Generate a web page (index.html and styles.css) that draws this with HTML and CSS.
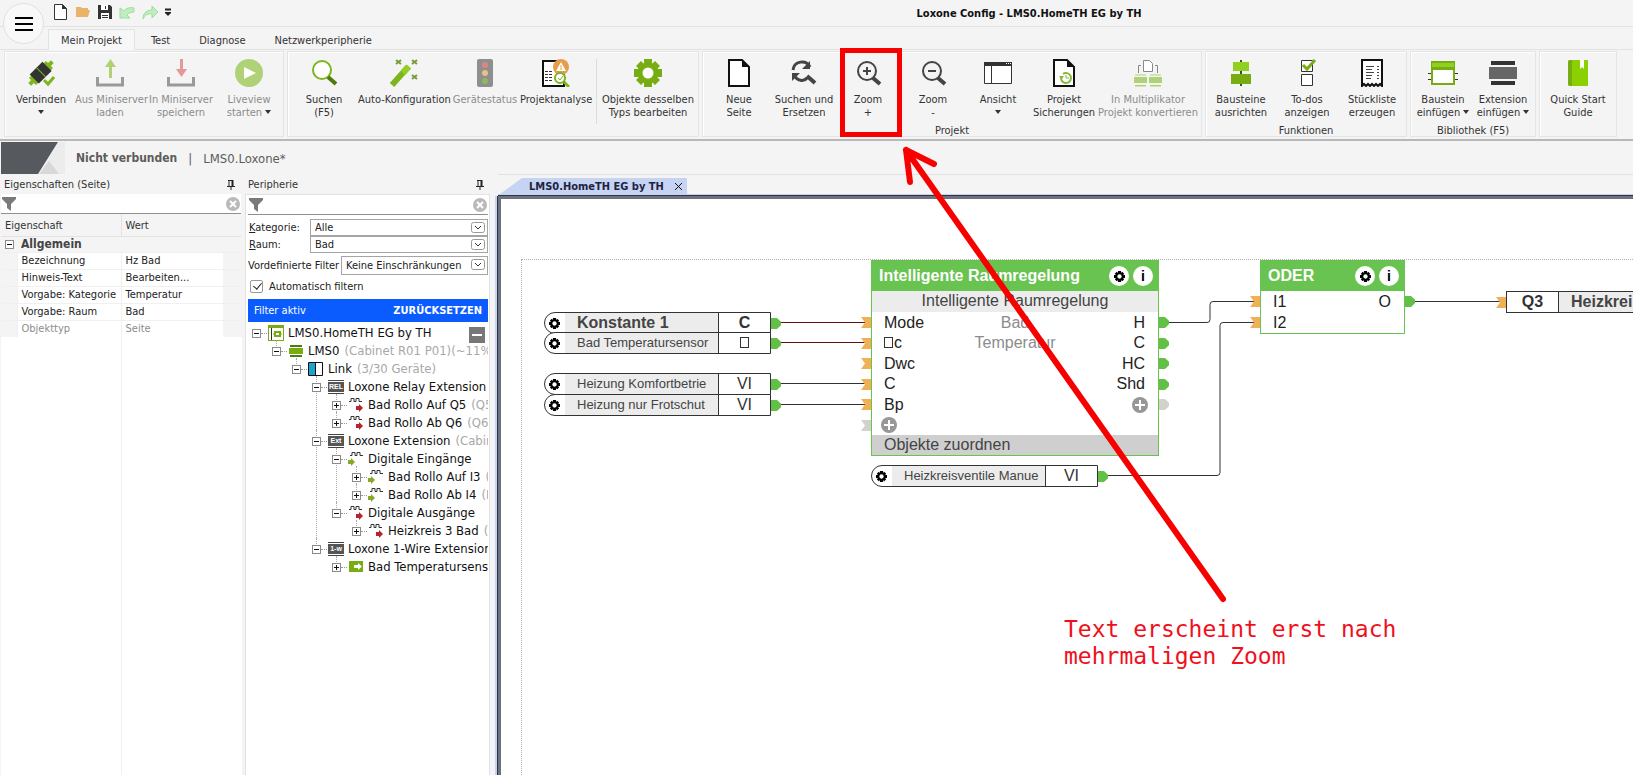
FILE: index.html
```html
<!DOCTYPE html>
<html lang="de">
<head>
    <meta charset="UTF-8">
    <meta name="viewport" content="width=device-width, initial-scale=1.0">
    <title>Loxone Config - LMS0.HomeTH EG by TH</title>
    <link rel="stylesheet" href="styles.css">
</head>
<body>
    <svg class="defs" aria-hidden="true">
        <symbol id="gear" viewBox="0 0 28 28">
            <g stroke="currentColor" stroke-width="8">
                <path d="M14 0v28M0 14h28"/>
                <path stroke-width="7" d="M4.500 4.500l19 19M23.500 4.500l-19 19"/>
            </g>
            <circle cx="14" cy="14" r="10.500" fill="currentColor"/>
            <circle cx="14" cy="14" r="5.500" fill="#fff"/>
        </symbol>
        <symbol id="funnel" viewBox="0 0 14 14"><path fill="#7a7a7a" d="M0 0h14v2L9 7v7l-4-3V7L0 2z"/></symbol>
        <symbol id="clear" viewBox="0 0 14 14"><circle cx="7" cy="7" r="7" fill="#b9b9b9"/><path d="M4 4l6 6M10 4l-6 6" stroke="#fff" stroke-width="2"/></symbol>
        <symbol id="pin" viewBox="0 0 8 10"><path d="M2 0v6M1 .5h5M0 6.500h8M4 6v4" stroke="#222" fill="none"/><path d="M5.500 0v6" stroke="#222" stroke-width="2"/></symbol>
        <symbol id="plus" viewBox="0 0 16 16"><circle cx="8" cy="8" r="8" fill="#979797"/><path d="M8 3v10M3 8h10" stroke="#fff" stroke-width="2"/></symbol>
        <symbol id="chev" viewBox="0 0 14 11"><rect x=".5" y=".5" width="13" height="10" rx="2" fill="#fff" stroke="#999"/><path d="M4 4l3 3 3-3" fill="none" stroke="#333"/></symbol>
        <symbol id="dig-out" viewBox="0 0 16 16"><path d="M1 4.500h2v-3h3v3h2v-3h3v3h3" fill="none" stroke="#333"/><path d="M8 9h3V7l4 4-4 4v-2H8z" fill="#b5232e"/></symbol>
        <symbol id="dig-in" viewBox="0 0 16 16"><path d="M2 4.500h2v-3h3v3h2v-3h3v3h3" fill="none" stroke="#333"/><path d="M0 9h3V7l4 4-4 4v-2H0z" fill="#85a82d"/></symbol>
    </svg>

    <header class="titlebar">
        <button class="app-button" aria-label="Menü">
            <svg width="20" height="16"><path d="M1 2h18M1 8h18M1 14h18" stroke="#000" stroke-width="2"/></svg>
        </button>
        <div class="quickbar">
            <button aria-label="Neu"><svg width="16" height="18"><path d="M1.500 1.500h8l4 4v11h-12z" fill="#fff" stroke="#333"/><path d="M9 1v5h5z" fill="#333"/></svg></button>
            <button aria-label="Öffnen"><svg width="16" height="18"><path d="M1 4h5l1 1h6v2h2l-2 7H1z" fill="#e9b468"/></svg></button>
            <button aria-label="Speichern"><svg width="16" height="18"><path d="M1 2h12l2 2v12H1z" fill="#333"/><path d="M4 2h7v5H4zM4 10h8v6H4z" fill="#fff"/><path d="M8.500 3v3M5 12.500h6M5 14.500h6" stroke="#333"/></svg></button>
            <button aria-label="Rückgängig"><svg width="16" height="18"><path d="M1 5v10h10l-3-3c1-2 4-3 7-3V5c-4-1-8 0-10 3z" fill="#c4ecc2" stroke="#9adf9a"/></svg></button>
            <button aria-label="Wiederholen"><svg width="18" height="18"><path d="M11 3l6 6-6 6v-4c-4-1-7 1-9 5 0-6 4-9 9-9z" fill="#c4ecc2" stroke="#9adf9a"/></svg></button>
            <button aria-label="Anpassen"><svg width="6" height="18"><path d="M0 6.500h6" stroke="#222" stroke-width="2"/><path d="M0 9h6v1l-3 3-3-3z" fill="#222"/></svg></button>
        </div>
        <h1>Loxone Config - LMS0.HomeTH EG by TH</h1>
    </header>

    <nav class="tabs">
        <a class="active" href="#projekt">Mein Projekt</a>
        <a href="#test">Test</a>
        <a href="#diagnose">Diagnose</a>
        <a href="#netzwerk">Netzwerkperipherie</a>
    </nav>

    <div class="ribbon" id="projekt">
        <section class="group">
            <div class="tools">
                <button class="w68">
                    <svg width="28" height="28"><g transform="rotate(-45 14 14)"><path d="M-2 12h4v-3h24v3h4v4h-4v3H2v-3h-4z" fill="#7db51c"/><rect x="5" y="7" width="18" height="13" fill="#333"/><path d="M14.500 7v13" stroke="#7db51c"/></g><path d="M17 21l4 4 6-7" fill="none" stroke="#7db51c" stroke-width="3"/></svg>
                    Verbinden<br><i class="caret"></i>
                </button>
                <button class="w70" disabled>
                    <svg width="28" height="28"><path d="M1.500 18v8h25v-8" fill="none" stroke="#999" stroke-width="3"/><path d="M14.500 19V4" stroke="#afd277" stroke-width="3"/><path d="M9 8l5.500-8L20 8z" fill="#afd277"/></svg>
                    Aus Miniserver<br>laden
                </button>
                <button class="w72" disabled>
                    <svg width="28" height="28"><path d="M1.500 18v8h25v-8" fill="none" stroke="#999" stroke-width="3"/><path d="M14.500 0v12" stroke="#e39a97" stroke-width="3"/><path d="M9 10l5.500 8 5.500-8z" fill="#e39a97"/></svg>
                    In Miniserver<br>speichern
                </button>
                <button class="w64" disabled>
                    <svg width="28" height="28"><circle cx="14" cy="14" r="14" fill="#afd277"/><path d="M9 8l12 6-12 6z" fill="#fff"/></svg>
                    Liveview<br>starten <i class="caret"></i>
                </button>
            </div>
        </section>

        <section class="group">
            <div class="tools">
                <button class="w68">
                    <svg width="28" height="28"><circle cx="12" cy="11" r="9" fill="#fff" stroke="#7db51c" stroke-width="2"/><path d="M18 18l8 7" stroke="#4e7a10" stroke-width="4"/></svg>
                    Suchen<br>(F5)
                </button>
                <button class="w92">
                    <svg width="28" height="28"><path d="M2 26L18 8" stroke="#7db51c" stroke-width="6"/><path d="M13 14l6-6.500" stroke="#8fd120" stroke-width="6"/><path d="M6 1l5 4M11 1L6 5M22 1l5 4M27 1l-5 4M22 16l5 4M27 16l-5 4" stroke="#7a9c3a" stroke-width="2"/></svg>
                    Auto-Konfiguration
                </button>
                <button class="w70" disabled>
                    <svg width="28" height="28"><rect x="6" width="16" height="28" rx="2" fill="#8f8f8f"/><circle cx="14" cy="6" r="3" fill="#dc8683"/><circle cx="14" cy="14" r="3" fill="#edc183"/><circle cx="14" cy="22" r="3" fill="#8dba58"/></svg>
                    Gerätestatus
                </button>
                <button class="w72">
                    <svg width="28" height="28"><path d="M1 2h21v25H1z" fill="#fff" stroke="#111" stroke-width="2"/><path d="M3 12.500h8M3 15.500h8M3 18.500h8M3 21.500h8" stroke="#333" stroke-dasharray="3 1"/><circle cx="19" cy="8" r="8" fill="#e79c4c"/><path d="M19 3l5 9H14z" fill="#fff"/><path d="M19 6v5" stroke="#e79c4c"/><circle cx="18" cy="19" r="5" fill="#fff" stroke="#7db51c" stroke-width="2"/><path d="M22 23l5 5" stroke="#7db51c" stroke-width="3"/><path d="M16 19l2 2 3-4" fill="none" stroke="#7db51c"/></svg>
                    Projektanalyse
                </button>
                <div class="sep"></div>
                <button class="w96">
                    <svg class="green" width="28" height="28"><use href="#gear"/></svg>
                    Objekte desselben<br>Typs bearbeiten
                </button>
            </div>
        </section>

        <section class="group">
            <div class="tools">
                <button class="w68">
                    <svg width="28" height="28"><path d="M4 1h13l7 7v19H4z" fill="#fff" stroke="#111" stroke-width="2"/><path d="M17 1v7h7z" fill="#111"/></svg>
                    Neue<br>Seite
                </button>
                <button class="w62">
                    <svg width="28" height="28"><path d="M3 11c1-9 13-11 17-3M4 16c3 6 10 7 13 3" fill="none" stroke="#444" stroke-width="3"/><path d="M20 2v8h-8zM2 22v-8h8z" fill="#444"/><path d="M17 17l8 7" stroke="#444" stroke-width="4"/></svg>
                    Suchen und<br>Ersetzen
                </button>
                <button class="w66">
                    <svg width="28" height="28"><circle cx="13" cy="12" r="9" fill="none" stroke="#444" stroke-width="2"/><path d="M9 12h8M13 8v8" stroke="#444" stroke-width="2"/><path d="M19 19l7 6" stroke="#444" stroke-width="4"/></svg>
                    Zoom<br>+
                </button>
                <button class="w64">
                    <svg width="28" height="28"><circle cx="13" cy="12" r="9" fill="none" stroke="#444" stroke-width="2"/><path d="M9 12h8" stroke="#444" stroke-width="2"/><path d="M19 19l7 6" stroke="#444" stroke-width="4"/></svg>
                    Zoom<br>-
                </button>
                <button class="w66">
                    <svg width="28" height="28"><path d="M.5 3.500h27v21H.5z" fill="#fff" stroke="#333"/><path d="M0 5h28" stroke="#333" stroke-width="4"/><path d="M7.500 7v17" stroke="#333"/><path d="M22 4.500h5" stroke="#fff" stroke-dasharray="1 1"/></svg>
                    Ansicht<br><i class="caret"></i>
                </button>
                <button class="w66">
                    <svg width="28" height="28"><path d="M4 1h13l7 7v19H4z" fill="#fff" stroke="#111" stroke-width="2"/><path d="M17 1v7h7z" fill="#111"/><path d="M11 19a5 5 0 1 0 2-4" fill="none" stroke="#86b83c" stroke-width="2"/><path d="M9 17h5l-2.500 4z" fill="#86b83c"/><path d="M16 16v3h3" fill="none" stroke="#86b83c"/></svg>
                    Projekt<br>Sicherungen
                </button>
                <button class="w102" disabled>
                    <svg width="28" height="28"><path d="M9.500 1.500h6l3 3v8h-9z" fill="#fff" stroke="#888"/><path d="M7 6.500H4.500V14M21 6.500h2.500V14" fill="none" stroke="#888"/><path d="M0 18h13v6H0zM15 18h13v6H15zM1 15.500h11v1H1zM16 15.500h11v1H16zM1 26h11v1.500H1zM16 26h11v1.500H16z" fill="#afd277"/></svg>
                    In Multiplikator<br>Projekt konvertieren
                </button>
            </div>
            <h2>Projekt</h2>
        </section>

        <section class="group">
            <div class="tools">
                <button class="w66">
                    <svg width="28" height="28"><path d="M14 1v26" stroke="#365a0a" stroke-width="2"/><path d="M6 3h16v9H6z" fill="#8fd120"/><path d="M4 15h20v10H4z" fill="#77ad12"/></svg>
                    Bausteine<br>ausrichten
                </button>
                <button class="w66">
                    <svg width="28" height="28"><path d="M8.500 1.500h11v11h-11zM8.500 15.500h11v11h-11z" fill="#fff" stroke="#333"/><path d="M10 6l4 4 8-9" fill="none" stroke="#77ad12" stroke-width="3"/></svg>
                    To-dos<br>anzeigen
                </button>
                <button class="w64">
                    <svg width="28" height="28"><path d="M4 27V1h20v26l-2-2-2 2-2-2-2 2-2-2-2 2-2-2-2 2-2-2z" fill="#fff" stroke="#111" stroke-width="2"/><path d="M8 7.500h8M8 10.500h6M8 13.500h8M8 16.500h6M8 19.500h5M19 7.500h2M19 10.500h2M19 13.500h2M19 16.500h2M19 19.500h2" stroke="#444"/></svg>
                    Stückliste<br>erzeugen
                </button>
            </div>
            <h2>Funktionen</h2>
        </section>

        <section class="group">
            <div class="tools">
                <button class="w60">
                    <svg width="30" height="28"><path d="M0 14.500h30M0 20.500h30" stroke="#333"/><rect x="3" y="2" width="24" height="24" fill="#77ad12"/><path d="M4 4h22v4H4z" fill="#8fd120"/><rect x="5" y="11" width="20" height="13" fill="#fff"/></svg>
                    Baustein<br>einfügen <i class="caret"></i>
                </button>
                <button class="w60">
                    <svg width="28" height="28"><path d="M2 2h24v4H2zM2 22h24v4H2z" fill="#333"/><path d="M0 8h28v12H0z" fill="#666"/></svg>
                    Extension<br>einfügen <i class="caret"></i>
                </button>
            </div>
            <h2>Bibliothek (F5)</h2>
        </section>

        <section class="group">
            <div class="tools">
                <button class="w72">
                    <svg width="28" height="28"><path d="M6 1h18v26H6q-2 0-2-2V3q0-2 2-2z" fill="#8bd000"/><path d="M4 3q0-2 2-2h2v26H6q-2 0-2-2z" fill="#77ad12"/><path d="M16 1h4v9l-2-2-2 2z" fill="#fff"/></svg>
                    Quick Start<br>Guide
                </button>
            </div>
        </section>
    </div>

    <div class="status">
        <svg width="64" height="32"><path d="M38 32L58 0h6v32z" fill="#ececec"/><path d="M38 32l10-13 10 13z" fill="#d8d8d8"/><path d="M0 0h57L37 32H0z" fill="#565a5e"/></svg>
        <strong>Nicht verbunden</strong><span>|</span><span>LMS0.Loxone*</span>
    </div>

    <main class="workspace">
        <aside class="panel props">
            <header><h2>Eigenschaften (Seite)</h2><button aria-label="Anheften"><svg width="8" height="10"><use href="#pin"/></svg></button></header>
            <div class="filter">
                <svg width="14" height="14"><use href="#funnel"/></svg>
                <input type="text" aria-label="Eigenschaften filtern">
                <button aria-label="Filter löschen"><svg width="14" height="14"><use href="#clear"/></svg></button>
            </div>
            <table>
                <colgroup><col class="c-exp"><col class="c-name"><col><col class="c-pad"></colgroup>
                <thead>
                    <tr><th colspan="2">Eigenschaft</th><th>Wert</th><th class="pad"></th></tr>
                </thead>
                <tbody>
                    <tr class="section"><td class="exp"><i class="box minus"></i></td><td colspan="3">Allgemein</td></tr>
                    <tr><td class="exp"></td><td>Bezeichnung</td><td>Hz Bad</td><td class="pad"></td></tr>
                    <tr><td class="exp"></td><td>Hinweis-Text</td><td>Bearbeiten...</td><td class="pad"></td></tr>
                    <tr><td class="exp"></td><td>Vorgabe: Kategorie</td><td>Temperatur</td><td class="pad"></td></tr>
                    <tr><td class="exp"></td><td>Vorgabe: Raum</td><td>Bad</td><td class="pad"></td></tr>
                    <tr class="muted"><td class="exp"></td><td>Objekttyp</td><td>Seite</td><td class="pad"></td></tr>
                </tbody>
            </table>
            <div class="rest"></div>
        </aside>

        <aside class="panel periphery">
            <header><h2>Peripherie</h2><button aria-label="Anheften"><svg width="8" height="10"><use href="#pin"/></svg></button></header>
            <div class="sheet">
                <div class="filter">
                    <svg width="14" height="14"><use href="#funnel"/></svg>
                    <input type="text" aria-label="Peripherie filtern">
                    <button aria-label="Filter löschen"><svg width="14" height="14"><use href="#clear"/></svg></button>
                </div>
                <form>
                    <div class="field"><label for="kategorie"><u>K</u>ategorie:</label><span class="select"><select id="kategorie"><option>Alle</option></select><svg width="14" height="11"><use href="#chev"/></svg></span></div>
                    <div class="field"><label for="raum"><u>R</u>aum:</label><span class="select"><select id="raum"><option>Bad</option></select><svg width="14" height="11"><use href="#chev"/></svg></span></div>
                    <div class="field wide"><label for="vordefiniert">Vordefinierte Filter</label><span class="select"><select id="vordefiniert"><option>Keine Einschränkungen</option></select><svg width="14" height="11"><use href="#chev"/></svg></span></div>
                    <div class="check"><input type="checkbox" id="auto" checked><label for="auto">Automatisch filtern</label></div>
                </form>
                <div class="filterbar"><span>Filter aktiv</span><button>ZURÜCKSETZEN</button></div>

                <div class="tree">
                    <button class="collapse" aria-label="Alle einklappen"></button>
                    <ul>
                        <li>
                            <div class="node"><i class="box minus"></i><svg width="16" height="16"><path d="M0 0h16v16H0z" fill="#77ad12"/><path d="M1 3h14v12H1z" fill="#fff"/><path d="M3.500 3v12" stroke="#333"/><rect x="7" y="7" width="5" height="4" fill="none" stroke="#77ad12" stroke-width="2"/><path d="M5 9h1M13 9h1" stroke="#77ad12"/></svg>LMS0.HomeTH EG by TH</div>
                            <ul>
                                <li>
                                    <div class="node"><i class="box minus"></i><svg width="16" height="16"><path d="M2 2h12v2H2zM2 12h12v2H2z" fill="#4e7a10"/><path d="M1 5h14v6H1z" fill="#77ad12"/></svg>LMS0 <em>(Cabinet R01 P01)(~11%</em></div>
                                    <ul>
                                        <li>
                                            <div class="node"><i class="box minus"></i><svg width="16" height="16"><path d="M.5 1.500h14v13H.5z" fill="#fff" stroke="#111"/><path d="M1 2h6v12H1z" fill="#1ca4cf"/><path d="M7.500 2v12" stroke="#111"/></svg>Link <em>(3/30 Geräte)</em></div>
                                            <ul>
                                                <li>
                                                    <div class="node"><i class="box minus"></i><span class="ext">REL</span>Loxone Relay Extension</div>
                                                    <ul>
                                                        <li><div class="node"><i class="box"></i><svg width="16" height="16"><use href="#dig-out"/></svg>Bad Rollo Auf Q5 <em>(Q5</em></div></li>
                                                        <li><div class="node"><i class="box"></i><svg width="16" height="16"><use href="#dig-out"/></svg>Bad Rollo Ab Q6 <em>(Q6)</em></div></li>
                                                    </ul>
                                                </li>
                                                <li>
                                                    <div class="node"><i class="box minus"></i><span class="ext">Ext</span>Loxone Extension <em>(Cabin</em></div>
                                                    <ul>
                                                        <li>
                                                            <div class="node"><i class="box minus"></i><svg width="16" height="16"><use href="#dig-in"/></svg>Digitale Eingänge</div>
                                                            <ul>
                                                                <li><div class="node"><i class="box"></i><svg width="16" height="16"><use href="#dig-in"/></svg>Bad Rollo Auf I3 <em>(</em></div></li>
                                                                <li><div class="node"><i class="box"></i><svg width="16" height="16"><use href="#dig-in"/></svg>Bad Rollo Ab I4 <em>(I</em></div></li>
                                                            </ul>
                                                        </li>
                                                        <li>
                                                            <div class="node"><i class="box minus"></i><svg width="16" height="16"><use href="#dig-out"/></svg>Digitale Ausgänge</div>
                                                            <ul>
                                                                <li><div class="node"><i class="box"></i><svg width="16" height="16"><use href="#dig-out"/></svg>Heizkreis 3 Bad <em>(Q</em></div></li>
                                                            </ul>
                                                        </li>
                                                    </ul>
                                                </li>
                                                <li>
                                                    <div class="node"><i class="box minus"></i><span class="ext">1-w</span>Loxone 1-Wire Extension</div>
                                                    <ul>
                                                        <li><div class="node"><i class="box"></i><svg width="16" height="16"><path d="M1 2h14v11H1z" fill="#77ad12"/><path d="M6 6h4V4l4 3.500-4 3.500V9H6z" fill="#fff"/></svg>Bad Temperatursens</div></li>
                                                    </ul>
                                                </li>
                                            </ul>
                                        </li>
                                    </ul>
                                </li>
                            </ul>
                        </li>
                    </ul>
                </div>
            </div>
        </aside>

        <section class="editor">
            <div class="doc-tabs"><div class="doc-tab"><span>LMS0.HomeTH EG by TH</span><button aria-label="Schließen"><svg width="9" height="9"><path d="M1 1l7 7M8 1L1 8" stroke="#111"/></svg></button></div></div>
            <div class="canvas">
                <div class="page"></div>
                <svg class="wires" width="1132" height="576" fill="none" stroke="#333">
                    <path stroke="#5a1212" d="M277 123.500h92M277 143.500h92"/>
                    <path d="M277 184.500h92M277 205.500h92"/>
                    <path d="M667 123.500h39q3 0 3-3v-15q0-3 3-3h42"/>
                    <path d="M606 276.500h110q3 0 3-3v-147q0-3 3-3h32"/>
                    <path d="M912 102.500h88"/>
                </svg>

                <div class="tag big t1"><svg class="ico"><use href="#gear"/></svg><span>Konstante 1</span><b>C</b><i class="port out"></i></div>
                <div class="tag t2"><svg class="ico"><use href="#gear"/></svg><span>Bad Temperatursensor</span><b><i class="tofu"></i></b><i class="port out"></i></div>
                <div class="tag t3"><svg class="ico"><use href="#gear"/></svg><span>Heizung Komfortbetrie</span><b>VI</b><i class="port out"></i></div>
                <div class="tag t4"><svg class="ico"><use href="#gear"/></svg><span>Heizung nur Frotschut</span><b>VI</b><i class="port out"></i></div>
                <div class="tag t5"><svg class="ico"><use href="#gear"/></svg><span>Heizkreisventile Manue</span><b>VI</b><i class="port out"></i></div>

                <article class="block room">
                    <header><h3>Intelligente Raumregelung</h3><button aria-label="Einstellungen"><svg class="ico"><use href="#gear"/></svg></button><button aria-label="Info">i</button></header>
                    <p class="sub">Intelligente Raumregelung</p>
                    <div class="rows">
                        <div class="row"><i class="port in"></i><span>Mode</span><em>Bad</em><span>H</span><i class="port out"></i></div>
                        <div class="row"><i class="port in"></i><span><i class="tofu"></i>c</span><em>Temperatur</em><span>C</span><i class="port out"></i></div>
                        <div class="row"><i class="port in"></i><span>Dwc</span><span>HC</span><i class="port out"></i></div>
                        <div class="row"><i class="port in"></i><span>C</span><span>Shd</span><i class="port out"></i></div>
                        <div class="row"><i class="port in"></i><span>Bp</span><svg class="plus"><use href="#plus"/></svg><i class="port out off"></i></div>
                        <div class="row"><i class="port in off"></i><svg class="plus"><use href="#plus"/></svg></div>
                    </div>
                    <p class="assign">Objekte zuordnen</p>
                </article>

                <article class="block oder">
                    <header><h3>ODER</h3><button aria-label="Einstellungen"><svg class="ico"><use href="#gear"/></svg></button><button aria-label="Info">i</button></header>
                    <div class="rows">
                        <div class="row"><i class="port in"></i><span>I1</span><span>O</span><i class="port out"></i></div>
                        <div class="row"><i class="port in"></i><span>I2</span></div>
                    </div>
                </article>

                <div class="tag actor big"><i class="port in"></i><b>Q3</b><span>Heizkrei</span></div>

                <p class="note">Text erscheint erst nach<br>mehrmaligen Zoom</p>
            </div>
        </section>
    </main>

    <!-- markup on top of the window -->
    <svg class="markup" width="1240" height="620" fill="none" stroke="#f80000" stroke-width="5">
        <rect x="842.500" y="50.500" width="57" height="84"/>
        <path stroke-width="6" stroke-linecap="round" d="M906 150l317 449M906 150l28 14M906 150l4 32"/>
    </svg>
</body>
</html>
```
FILE: styles.css
```css
* {
    box-sizing: border-box;
}
body {
    margin: 0;
    height: 100vh;
    display: flex;
    flex-direction: column;
    position: relative;
    overflow: hidden;
    background: #f4f4f4;
    color: #333;
    font-family: "DejaVu Sans Condensed", Tahoma, sans-serif;
    font-size: 11px;
    line-height: 13px;
}
h1, h2, h3, p, ul {
    margin: 0;
    padding: 0;
    font-size: 11px;
    font-weight: normal;
}
button, input, select {
    font: inherit;
    color: inherit;
    background: none;
    border: 0;
    padding: 0;
    margin: 0;
}
svg {
    display: block;
    flex: none;
}
.defs {
    position: absolute;
    width: 0;
    height: 0;
}

/* title bar */
.titlebar {
    display: flex;
    align-items: center;
    height: 27px;
    border-bottom: 1px solid #e2e2e2;
}
.app-button {
    position: absolute;
    left: 3px;
    top: 3px;
    width: 41px;
    height: 41px;
    border: 1px solid #e0e0e0;
    border-radius: 50%;
    background: #f8f8f8;
    display: flex;
    align-items: center;
    justify-content: center;
}
.quickbar {
    flex: 0 0 425px;
    display: flex;
    gap: 6px;
    padding: 0 0 2px 53px;
}
.titlebar h1 {
    flex: 1;
    text-align: center;
    font-weight: bold;
    color: #111;
}

/* tabs */
.tabs {
    display: flex;
    height: 23px;
    padding: 2px 0 0 48px;
    border-bottom: 1px solid #e2e2e2;
}
.tabs a {
    padding: 5px 10px;
    margin-right: 9px;
    color: #333;
    text-decoration: none;
    height: 21px;
}
.tabs a.active {
    background: #f7f7f7;
    border: 1px solid #e2e2e2;
    border-bottom: 0;
    padding: 4px 12px;
    margin-right: 6px;
}

/* ribbon */
.ribbon {
    display: flex;
    gap: 3px;
    height: 91px;
    padding: 1px 0 2px 4px;
    border-bottom: 2px solid #b8b8b8;
}
.group {
    border: 1px solid #e4e4e4;
    box-shadow: inset 1px 1px #fff;
    padding: 7px 2px 0;
    white-space: nowrap;
}
.tools {
    display: flex;
    height: 65px;
}
.tools button {
    display: flow-root;
    text-align: center;
    align-self: flex-start;
}
.tools button svg {
    margin: 0 auto 6px;
}
.tools button:disabled {
    color: #8c8c8c;
}
.group h2 {
    text-align: center;
}
.sep {
    width: 1px;
    margin: 0 3px 0 4px;
    background: #dcdcdc;
}
.green {
    color: #77ad12;
}
.caret {
    display: inline-block;
    border: 3px solid transparent;
    border-top: 4px solid #333;
    border-bottom: 0;
    margin-bottom: 2px;
}
.w60 { width: 60px; }
.w62 { width: 62px; }
.w64 { width: 64px; }
.w66 { width: 66px; }
.w68 { width: 68px; }
.w70 { width: 70px; }
.w72 { width: 72px; }
.w92 { width: 92px; }
.w96 { width: 96px; }
.w102 { width: 102px; }

/* connection status */
.status {
    display: flex;
    align-items: center;
    gap: 11px;
    height: 33px;
    padding: 1px 0 0 1px;
    font-size: 13px;
    color: #5c5c5c;
}
.status strong {
    font-size: 12px;
}

/* panels */
.workspace {
    flex: 1;
    display: flex;
    min-height: 0;
}
.panel {
    display: flex;
    flex-direction: column;
    min-width: 0;
    min-height: 0;
}
.panel header {
    display: flex;
    justify-content: space-between;
    align-items: center;
    height: 20px;
    padding: 1px 6px 0 3px;
}
.filter {
    display: flex;
    align-items: center;
    height: 20px;
    padding: 0 1px;
    background: #fff;
    border-bottom: 1px solid #8f8f8f;
}
.filter input {
    flex: 1;
    min-width: 0;
    outline: 0;
}
.props {
    flex: 0 0 241px;
    padding-left: 1px;
}
.props table {
    width: 100%;
    table-layout: fixed;
    border-collapse: collapse;
}
.c-exp {
    width: 16px;
}
.c-name {
    width: 104px;
}
.c-pad {
    width: 18px;
}
.props th {
    height: 22px;
    padding: 1px 4px 0;
    font-weight: normal;
    text-align: left;
    border-bottom: 1px solid #e2e2e2;
}
.props th + th {
    border-left: 1px solid #e2e2e2;
}
.props td {
    height: 17px;
    padding: 0 0 0 4px;
    color: #222;
    white-space: nowrap;
    background: #fff;
    border: 1px solid #f0f0f0;
    border-width: 1px 0 0 1px;
}
.props .section td {
    font-size: 12px;
    font-weight: bold;
    height: 16px;
    color: #444;
    background: #f4f4f4;
    border: 0;
}
.props td.exp, .props td.pad, .props th.pad {
    background: #f4f4f4;
    border-left: 0;
}
.props .muted td {
    color: #8c8c8c;
}
.rest {
    flex: 1;
    width: 121px;
    border-right: 1px solid #f0f0f0;
    background: #fff;
    box-shadow: 120px 0 #fff;
}
.box {
    display: block;
    flex: none;
    width: 9px;
    height: 9px;
    border: 1px solid #8a8a8a;
    background: linear-gradient(#111, #111) center / 5px 1px no-repeat, linear-gradient(#111, #111) center / 1px 5px no-repeat, #fff;
}
.box.minus {
    background: linear-gradient(#111, #111) center / 5px 1px no-repeat, #fff;
}

/* periphery */
.periphery {
    flex: 0 0 250px;
    padding: 0 1px 0 4px;
}
.sheet {
    flex: 1;
    min-height: 0;
    padding: 0 1px 0 2px;
    background: #fff;
    border: 1px solid #e2e2e2;
    border-width: 1px 1px 0 1px;
    color: #222;
}
.periphery form {
    padding-top: 4px;
}
.field {
    display: flex;
    align-items: center;
    height: 17px;
    white-space: nowrap;
}
.field label {
    flex: 0 0 62px;
    padding-left: 1px;
}
.field.wide {
    height: 19px;
    margin-top: 3px;
}
.field.wide label {
    flex-basis: 93px;
    padding: 0;
}
.select {
    flex: 1;
    position: relative;
    height: 100%;
}
.select select {
    width: 100%;
    height: 100%;
    padding-left: 4px;
    appearance: none;
    border: 1px solid #a5a5a5;
    background: #fff;
}
.select svg {
    position: absolute;
    right: 3px;
    top: 3px;
}
.check {
    display: flex;
    align-items: center;
    gap: 6px;
    height: 24px;
    padding: 0 0 2px 2px;
}
.check input {
    appearance: none;
    width: 13px;
    height: 13px;
    border: 1px solid #999;
    border-radius: 2px;
}
.check input:checked::before {
    content: "";
    display: block;
    width: 4px;
    height: 7px;
    margin: 0 0 0 4px;
    border: solid #222;
    border-width: 0 1px 1px 0;
    transform: rotate(40deg);
}
.filterbar {
    display: flex;
    align-items: center;
    justify-content: space-between;
    height: 23px;
    padding: 0 6px;
    background: #0a5cff;
    color: #fff;
}
.filterbar button {
    font-weight: bold;
}

/* tree */
.tree {
    position: relative;
    padding-top: 2px;
    overflow: hidden;
    font-size: 13px;
    line-height: 18px;
    white-space: nowrap;
}
.tree ul {
    list-style: none;
    font-size: 13px;
}
.tree ul ul {
    padding-left: 20px;
}
.tree li {
    position: relative;
}
.tree ul ul > li::before {
    content: "";
    position: absolute;
    left: 8px;
    top: -2px;
    bottom: 0;
    border-left: 1px dotted #aaa;
}
.tree ul ul > li:last-child::before {
    bottom: auto;
    height: 8px;
}
.node {
    position: relative;
    display: flex;
    align-items: center;
    height: 18px;
    padding-left: 4px;
    color: #111;
}
.node .box::after {
    content: "";
    display: block;
    width: 6px;
    margin: 3px 0 0 8px;
    border-top: 1px dotted #999;
}
.node svg, .ext {
    flex: none;
    margin: 0 4px 0 7px;
}
.node em {
    font-style: normal;
    color: #a8a8a8;
    margin-left: 5px;
}
.ext {
    width: 16px;
    height: 14px;
    background: #555;
    border: solid #444;
    border-width: 1px 0;
    box-shadow: inset 0 1px #fff, inset 0 -1px #fff;
    color: #fff;
    font: bold 7px/12px "Liberation Sans", sans-serif;
    text-align: center;
}
.collapse {
    position: absolute;
    right: 3px;
    top: 5px;
    width: 16px;
    height: 16px;
    z-index: 1;
    background: linear-gradient(#fff, #fff) center / 10px 2px no-repeat, #777;
}

/* editor */
.editor {
    flex: 1;
    min-width: 0;
    margin-left: 7px;
    display: flex;
    flex-direction: column;
    border-top: 1px solid #e2e2e2;
}
.doc-tabs {
    height: 21px;
    padding: 3px 0 0 2px;
    border-bottom: 2px solid #c6d3f3;
}
.doc-tab {
    display: flex;
    align-items: center;
    justify-content: space-between;
    width: 187px;
    height: 16px;
    padding: 0 4px 0 29px;
    background: #c6d3f3;
    clip-path: polygon(22px 0, 100% 0, 100% 100%, 0 100%);
    font-weight: bold;
    color: #1c2340;
}
.canvas {
    flex: 1;
    position: relative;
    overflow: hidden;
    background: #fff;
    border: solid #6e727c;
    border-width: 3px 0 0 3px;
    box-shadow: -1px 0 #2e3346, 0 -1px #2e3346, -3px 0 #c6d3f3;
    font-family: "Liberation Sans", Arial, sans-serif;
    font-size: 16px;
    color: #222;
}
.page {
    position: absolute;
    left: 20px;
    top: 60px;
    right: 0;
    bottom: 0;
    border: 1px dotted #b0b0b0;
    border-width: 1px 0 0 1px;
}
.wires {
    position: absolute;
    left: 0;
    top: 0;
}
.ico {
    width: 11px;
    height: 11px;
    color: #000;
}
.port {
    position: absolute;
    top: 5px;
    width: 10px;
    height: 11px;
}
.port.in {
    left: -11px;
    background: #f0b055;
    clip-path: polygon(0 0, 100% 0, 100% 100%, 0 100%, 4px 50%);
}
.port.out {
    right: -11px;
    background: #63c047;
    clip-path: polygon(0 0, 6px 0, 100% 35%, 100% 65%, 6px 100%, 0 100%);
}
.port.off {
    background: #d4d0cc;
}
.tofu {
    display: inline-block;
    width: 9px;
    height: 11px;
    border: 1px solid #333;
    margin-right: 1px;
}
.tag {
    position: absolute;
    display: flex;
    align-items: center;
    width: 227px;
    height: 22px;
    border: 1px solid #333;
    border-radius: 11px 0 0 11px;
    background: #fff;
    font-size: 13px;
    color: #444;
}
.tag span {
    flex: 1;
    align-self: stretch;
    padding-left: 12px;
    background: #ececec;
    line-height: 20px;
    white-space: nowrap;
}
.tag .ico {
    margin: 0 5px 0 4px;
}
.tag b {
    width: 52px;
    align-self: stretch;
    border-left: 1px solid #333;
    font-size: 16px;
    font-weight: normal;
    line-height: 20px;
    text-align: center;
    color: #333;
}
.tag.big, .tag.big b {
    font-size: 16px;
    font-weight: bold;
}
.t1 { left: 43px; top: 113px; }
.t2 { left: 43px; top: 133px; }
.t3 { left: 43px; top: 174px; }
.t4 { left: 43px; top: 195px; }
.t5 { left: 370px; top: 266px; }
.tag.actor {
    left: 1005px;
    top: 92px;
    border-radius: 0;
}
.actor b {
    border: 0;
    border-right: 1px solid #333;
}
.block {
    position: absolute;
    top: 61px;
    background: #fff;
    border: 1px solid #69c350;
    line-height: 20px;
}
.room {
    left: 370px;
    width: 288px;
}
.oder {
    left: 759px;
    width: 145px;
}
.block header {
    display: flex;
    align-items: center;
    gap: 4px;
    height: 30px;
    padding: 0 5px 0 7px;
    background: #69c350;
}
.block h3 {
    flex: 1;
    font-size: 16px;
    font-weight: bold;
    color: #fff;
}
.block header button {
    display: flex;
    align-items: center;
    justify-content: center;
    width: 20px;
    height: 20px;
    border-radius: 50%;
    background: #fff;
    font-size: 14px;
    font-weight: bold;
    color: #000;
}
.block p {
    height: 21px;
    font-size: 16px;
    color: #444;
}
.sub {
    text-align: center;
    background: #ececec;
}
.block .assign {
    height: 20px;
    padding-left: 12px;
    background: #cfcfcf;
}
.row {
    position: relative;
    display: flex;
    align-items: center;
    justify-content: space-between;
    height: 21px;
    padding: 0 13px 0 12px;
}
.room .row:nth-child(even) {
    height: 20px;
}
.row em {
    position: absolute;
    left: 0;
    right: 0;
    text-align: center;
    font-style: normal;
    color: #8c8c8c;
}
.plus {
    width: 16px;
    height: 16px;
    margin: 0 -3px;
}
.note {
    position: absolute;
    left: 563px;
    top: 417px;
    font: 23px/27px "DejaVu Sans Mono", monospace;
    color: #f0101c;
}

.markup {
    position: absolute;
    left: 0;
    top: 0;
    pointer-events: none;
}
```
